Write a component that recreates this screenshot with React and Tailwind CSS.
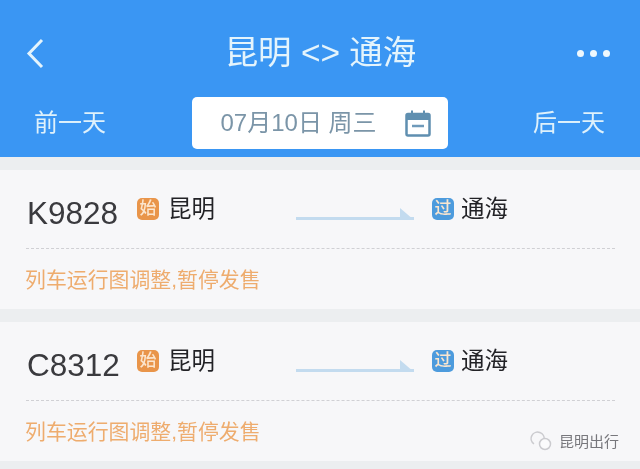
import React from "react";

const FONT = "font-['Liberation_Sans','Noto_Sans_CJK_SC',sans-serif]";

function Arrow() {
  return (
    <svg width="118" height="14" viewBox="0 0 118 14" className="mt-[10px] shrink-0">
      <rect x="0" y="10" width="118" height="3" fill="#c3dbef" />
      <path d="M104 1 L118 13 L104 13 Z" fill="#c3dbef" />
    </svg>
  );
}

function Badge({ color, children }) {
  return (
    <span className={`flex h-[22px] w-[22px] shrink-0 items-center justify-center rounded-[5px] text-[17px] font-medium leading-none text-[#fbe6cf] ${color}`}>
      {children}
    </span>
  );
}

function Card({ number }) {
  return (
    <section className="bg-[#f7f7f9]">
      <div className="ml-[26px] mr-[25px] flex h-[79px] items-center border-b-[1.5px] border-dashed border-[#d0d0d4]">
        <span className="ml-[1px] mt-[10px] w-[110px] shrink-0 text-[31.5px] leading-none text-[#3a3a3e]">{number}</span>
        <span className="mb-[1px] flex items-center">
          <Badge color="bg-[#e9954a]">始</Badge>
          <span className="ml-[9px] w-[128px] shrink-0 pt-[3px] text-[23.5px] leading-none text-[#222226]">昆明</span>
        </span>
        <Arrow />
        <span className="mb-[1px] ml-[18px] flex items-center">
          <Badge color="bg-[#4d9bdd]">过</Badge>
          <span className="ml-[7px] pt-[3px] text-[23.5px] leading-none text-[#222226]">通海</span>
        </span>
      </div>
      <div className="flex h-[60px] items-center pl-[25px] pt-[3px] text-[20.9px] leading-none text-[#eeac6e]">
        列车运行图调整,暂停发售
      </div>
    </section>
  );
}

export default function App() {
  return (
    <div className={`relative h-[469px] w-[640px] overflow-hidden bg-[#eceef0] blur-[0.5px] ${FONT}`}>
      <header className="h-[157px] bg-[#3a96f3]">
        <div className="flex h-[97px] items-center pl-[26px] pr-[30px] pt-[9px]">
          <svg width="18" height="31" viewBox="0 0 18 31" fill="none" className="shrink-0">
            <path d="M16 2 L3 15.5 L16 29" stroke="#e4f4fc" strokeWidth="3" />
          </svg>
          <h1 className="flex-1 pl-[20px] text-center text-[33.5px] font-normal leading-none text-[#e4f4fc]">昆明 &lt;&gt; 通海</h1>
          <div className="flex gap-[6px]">
            <span className="h-[7px] w-[7px] rounded-full bg-[#eef8fd]" />
            <span className="h-[7px] w-[7px] rounded-full bg-[#eef8fd]" />
            <span className="h-[7px] w-[7px] rounded-full bg-[#eef8fd]" />
          </div>
        </div>
        <div className="flex items-center justify-between pl-[34px] pr-[35px]">
          <span className="text-[24px] leading-none text-[#def1fb]">前一天</span>
          <div className="flex h-[52px] w-[256px] items-center rounded-[5px] bg-white pl-[29px]">
            <span className="w-[184px] shrink-0 whitespace-pre text-[24px] leading-none text-[#7b95a8]">07月10日 周三</span>
            <svg width="26" height="27" viewBox="0 0 26 27" fill="none" className="shrink-0">
              <rect x="1.5" y="4" width="23" height="21.5" rx="1.5" stroke="#5f8fb0" strokeWidth="2.5" />
              <rect x="1.5" y="4" width="23" height="6" fill="#5f8fb0" />
              <path d="M7 0.5 V6 M19 0.5 V6" stroke="#5f8fb0" strokeWidth="2" />
              <path d="M7 16 H19" stroke="#6f9aba" strokeWidth="2.5" />
            </svg>
          </div>
          <span className="text-[24px] leading-none text-[#def1fb]">后一天</span>
        </div>
      </header>
      <div className="mt-[13px] flex flex-col gap-[13px]">
        <Card number="K9828" />
        <Card number="C8312" />
      </div>
      <div className="absolute left-[530px] top-[431px] flex items-center gap-[5px]">
        <svg width="24" height="20" viewBox="0 0 24 20" fill="none" className="shrink-0">
          <path d="M4 13 A6.5 6.5 0 1 1 14 9" stroke="#cbcbcf" strokeWidth="1.5" />
          <circle cx="15" cy="13" r="5.5" fill="#fbfbfc" stroke="#cbcbcf" strokeWidth="1.5" />
        </svg>
        <span className="text-[15px] leading-none text-[#77777c]">昆明出行</span>
      </div>
    </div>
  );
}
